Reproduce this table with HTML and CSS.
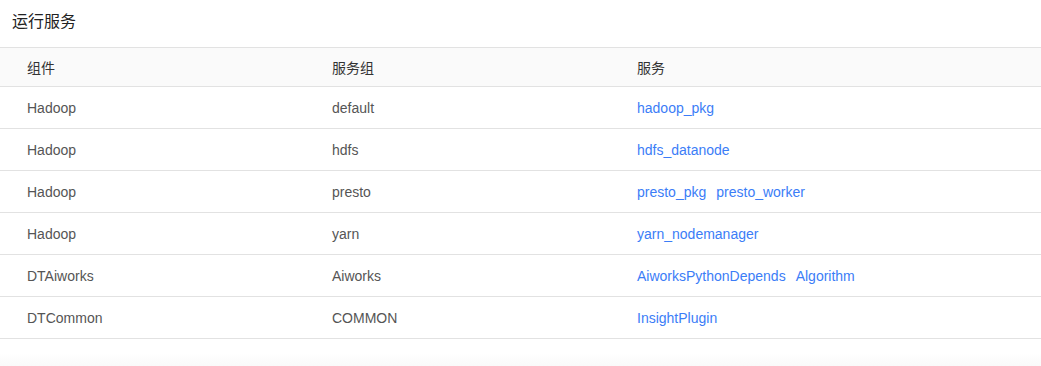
FILE: index.html
```html
<!DOCTYPE html>
<html>
<head>
<meta charset="utf-8">
<link rel="stylesheet" href="styles.css">
</head>
<body>
<div class="panel">
  <div class="title">运行服务</div>
  <table class="tbl">
    <thead>
      <tr><th class="c1">组件</th><th class="c2">服务组</th><th>服务</th></tr>
    </thead>
    <tbody>
      <tr><td>Hadoop</td><td>default</td><td><a>hadoop_pkg</a></td></tr>
      <tr><td>Hadoop</td><td>hdfs</td><td><a>hdfs_datanode</a></td></tr>
      <tr><td>Hadoop</td><td>presto</td><td><a>presto_pkg</a><a>presto_worker</a></td></tr>
      <tr><td>Hadoop</td><td>yarn</td><td><a>yarn_nodemanager</a></td></tr>
      <tr><td>DTAiworks</td><td>Aiworks</td><td><a>AiworksPythonDepends</a><a>Algorithm</a></td></tr>
      <tr><td>DTCommon</td><td>COMMON</td><td><a>InsightPlugin</a></td></tr>
    </tbody>
  </table>
  <div class="foot"></div>
</div>
</body>
</html>
```
FILE: styles.css
```css
html, body {
  margin: 0;
  padding: 0;
  background: #fff;
}
body {
  font-family: "Liberation Sans", Arial, "Noto Sans CJK SC", sans-serif;
  width: 1041px;
  height: 366px;
  overflow: hidden;
}
.title {
  height: 47px;
  line-height: 44px;
  padding-left: 12px;
  font-size: 16px;
  color: #222;
}
.tbl {
  width: 100%;
  border-collapse: collapse;
  font-size: 14px;
}
.tbl th {
  font-weight: normal;
  text-align: left;
  color: #333;
  background: #fafafa;
  height: 38px;
  padding: 0 0 0 27px;
  border-top: 1px solid #e2e2e2;
  border-bottom: 1px solid #e2e2e2;
}
.tbl .c1, .tbl .c2 {
  width: 278px;
}
.tbl td {
  color: #555;
  height: 41px;
  padding: 0 0 0 27px;
  border-bottom: 1px solid #e2e2e2;
}
.tbl a {
  color: #3b7df7;
  margin-right: 10px;
}
.foot {
  height: 28px;
  background: linear-gradient(to bottom, #fff 0, #fff 14px, #f9f9f9 28px);
}
```
